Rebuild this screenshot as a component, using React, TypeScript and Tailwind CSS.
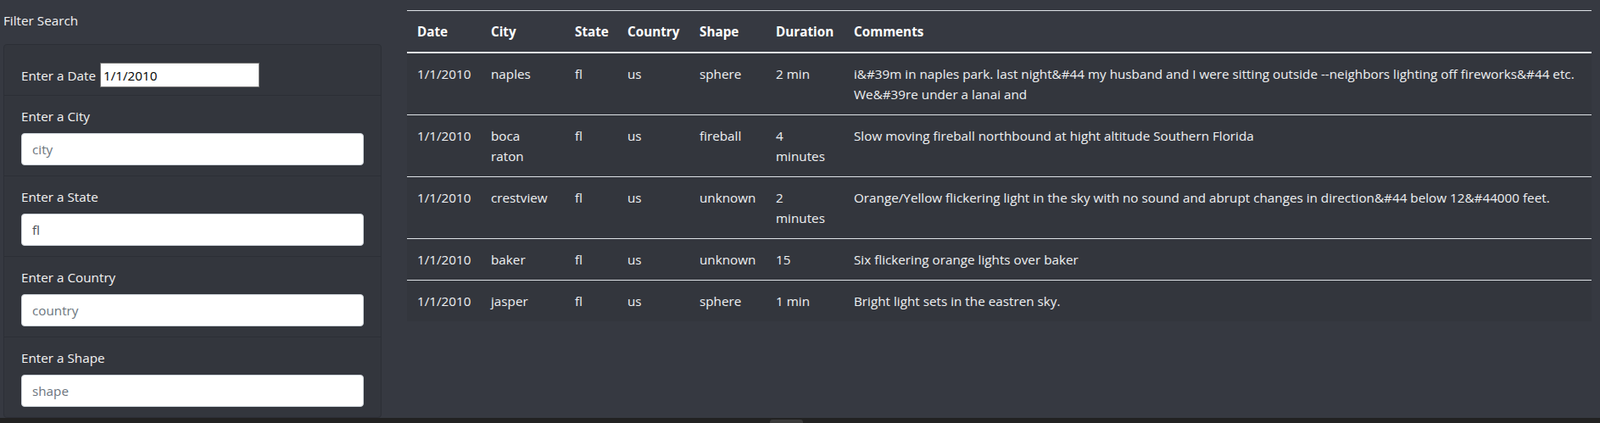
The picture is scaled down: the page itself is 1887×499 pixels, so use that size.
import React from "react";

type Row = {
  date: string;
  city: string;
  state: string;
  country: string;
  shape: string;
  duration: string;
  comments: string;
};

const rows: Row[] = [
  {
    date: "1/1/2010",
    city: "naples",
    state: "fl",
    country: "us",
    shape: "sphere",
    duration: "2 min",
    comments:
      "i&#39m in naples park. last night&#44 my husband and I were sitting outside --neighbors lighting off fireworks&#44 etc. We&#39re under a lanai and",
  },
  {
    date: "1/1/2010",
    city: "boca raton",
    state: "fl",
    country: "us",
    shape: "fireball",
    duration: "4 minutes",
    comments: "Slow moving fireball northbound at hight altitude Southern Florida",
  },
  {
    date: "1/1/2010",
    city: "crestview",
    state: "fl",
    country: "us",
    shape: "unknown",
    duration: "2 minutes",
    comments:
      "Orange/Yellow flickering light in the sky with no sound and abrupt changes in direction&#44 below 12&#44000 feet.",
  },
  {
    date: "1/1/2010",
    city: "baker",
    state: "fl",
    country: "us",
    shape: "unknown",
    duration: "15",
    comments: "Six flickering orange lights over baker",
  },
  {
    date: "1/1/2010",
    city: "jasper",
    state: "fl",
    country: "us",
    shape: "sphere",
    duration: "1 min",
    comments: "Bright light sets in the eastren sky.",
  },
];

function FilterField({
  label,
  placeholder,
  value,
  last,
}: {
  label: string;
  placeholder: string;
  value?: string;
  last?: boolean;
}) {
  return (
    <div
      className={
        "px-[20px] pt-[12px] " +
        (last ? "h-[94px]" : "h-[95px] border-b border-[#2c2f36]")
      }
    >
      <label className="block leading-[24px] mb-[8px] text-[#f3f3f3]">{label}</label>
      <input
        readOnly
        defaultValue={value}
        placeholder={placeholder}
        className="block w-full h-[38px] rounded-[4px] border border-[#ced4da] bg-white px-[12px] text-[15.25px] leading-[24px] text-[#495057] placeholder:text-[#6c757d] outline-none"
      />
    </div>
  );
}

export default function App() {
  const cell = "px-[12px] py-[12px] align-top";
  return (
    <div className="h-[499px] w-full flex flex-col bg-[#363941] text-[15.25px] leading-[24px] text-white font-['Open_Sans','Noto_Sans',sans-serif] overflow-hidden">
      <div className="flex-1 flex min-h-0">
        {/* Left filter panel */}
        <aside className="w-[450px] pl-[4px] shrink-0 flex flex-col">
          <div className="pt-[12px] mb-[16px] leading-[24px] text-[#f3f3f3]">Filter Search</div>
          <div className="w-[446px] rounded-[4px] border border-[#2c2f36] bg-[#33363d]">
            <div className="h-[60px] px-[20px] pt-[12px] border-b border-[#2c2f36] flex items-center gap-[5px]">
              <span className="leading-[24px] text-[#f3f3f3]">Enter a Date</span>
              <input
                readOnly
                defaultValue="1/1/2010"
                className="w-[188px] h-[29px] border border-[#767676] bg-white px-[3px] text-[15.25px] text-black outline-none"
              />
            </div>
            <FilterField label="Enter a City" placeholder="city" />
            <FilterField label="Enter a State" placeholder="state" value="fl" />
            <FilterField label="Enter a Country" placeholder="country" />
            <FilterField label="Enter a Shape" placeholder="shape" last />
          </div>
        </aside>

        {/* Table */}
        <div className="ml-[30px] pt-[12px]">
          <table className="w-[1397px] table-fixed border-separate border-spacing-0 text-left">
            <colgroup>
              <col className="w-[87px]" />
              <col className="w-[99px]" />
              <col className="w-[62px]" />
              <col className="w-[85px]" />
              <col className="w-[90px]" />
              <col className="w-[92px]" />
              <col />
            </colgroup>
            <thead>
              <tr>
                {["Date", "City", "State", "Country", "Shape", "Duration", "Comments"].map((h) => (
                  <th
                    key={h}
                    className="px-[12px] py-[12px] border-t border-b-2 border-t-[#dee2e6] border-b-[#dee2e6] font-bold text-white align-bottom"
                  >
                    {h}
                  </th>
                ))}
              </tr>
            </thead>
            <tbody>
              {rows.map((r, i) => {
                const b = i < rows.length - 1 ? " border-b border-[#dee2e6]" : "";
                return (
                  <tr key={i} className="bg-[#33363d] text-[#eef0f2]">
                    <td className={cell + b}>{r.date}</td>
                    <td className={cell + b}>{r.city}</td>
                    <td className={cell + b}>{r.state}</td>
                    <td className={cell + b}>{r.country}</td>
                    <td className={cell + b}>{r.shape}</td>
                    <td className={cell + b}>{r.duration}</td>
                    <td className={cell + b}>{r.comments}</td>
                  </tr>
                );
              })}
            </tbody>
          </table>
        </div>
      </div>

      {/* Horizontal scrollbar strip */}
      <div className="h-[6px] shrink-0 bg-[#222222]">
        <div className="ml-[908px] mt-[2px] h-[4px] w-[39px] rounded-t-[3px] bg-[#3b3b3b]" />
      </div>
    </div>
  );
}
